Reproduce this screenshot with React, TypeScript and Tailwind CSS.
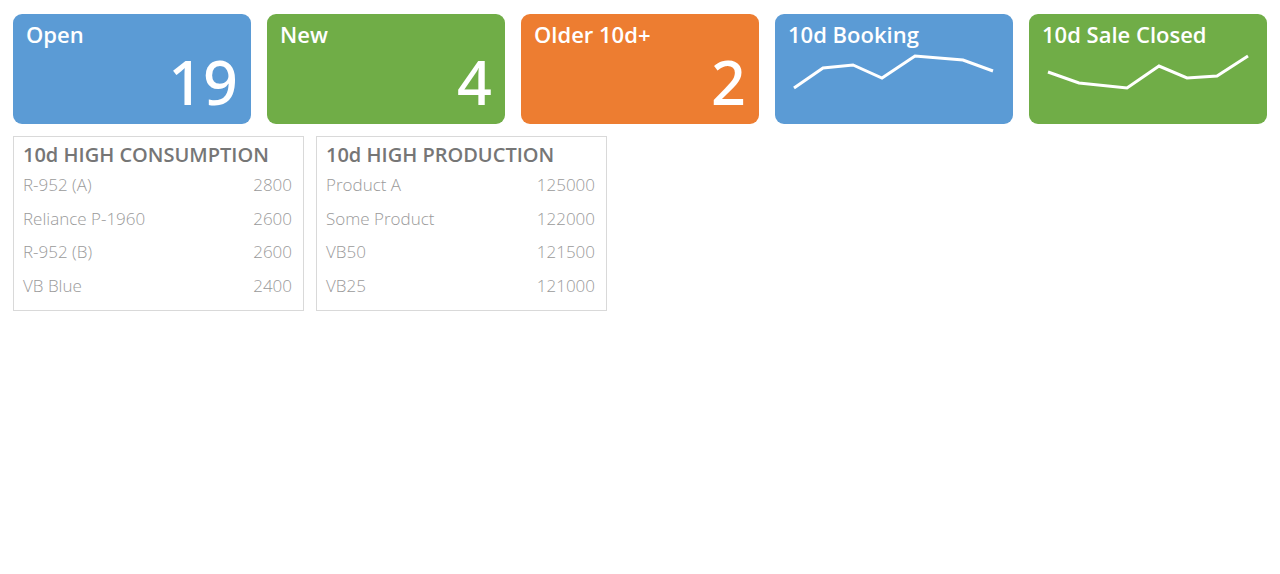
import React from "react"

const font = { fontFamily: '"Segoe UI", "Open Sans", "Noto Sans", sans-serif' }
const numFont = { fontFamily: '"Segoe UI", "Noto Sans", "Open Sans", sans-serif' }

type Tile = { title: string; value?: string; color: string; line?: [number, number][] }

// sparkline points are relative to the tile's top-left corner
const tiles: Tile[] = [
  { title: "Open", value: "19", color: "bg-[#5b9bd5]" },
  { title: "New", value: "4", color: "bg-[#70ad47]" },
  { title: "Older 10d+", value: "2", color: "bg-[#ed7d31]" },
  {
    title: "10d Booking",
    color: "bg-[#5b9bd5]",
    line: [[19, 74], [48, 54], [78, 51], [107, 64], [140, 42], [188, 46], [218, 57]],
  },
  {
    title: "10d Sale Closed",
    color: "bg-[#70ad47]",
    line: [[19, 58], [50, 69], [98, 74], [130, 52], [158, 64], [188, 62], [219, 42]],
  },
]

const consumption = [
  ["R-952 (A)", "2800"],
  ["Reliance P-1960", "2600"],
  ["R-952 (B)", "2600"],
  ["VB Blue", "2400"],
]

const production = [
  ["Product A", "125000"],
  ["Some Product", "122000"],
  ["VB50", "121500"],
  ["VB25", "121000"],
]

const KpiTile = ({ tile }: { tile: Tile }) => (
  <div className={`relative flex-1 h-[110px] rounded-[9px] ${tile.color} text-white`}>
    <div className="px-[13px] pt-[5px] text-[22px] font-semibold leading-[30px]">{tile.title}</div>
    {tile.value && (
      <div className="absolute right-[13px] top-[33px] text-[61px] leading-[70px] font-medium" style={numFont}>
        {tile.value}
      </div>
    )}
    {tile.line && (
      <svg className="absolute inset-0" width="238" height="110">
        <polyline
          points={tile.line.map((p) => p.join(",")).join(" ")}
          fill="none"
          stroke="white"
          strokeWidth="3"
          strokeLinejoin="miter"
        />
      </svg>
    )}
  </div>
)

const ListBox = ({ title, rows }: { title: string; rows: string[][] }) => (
  <div className="w-[291px] h-[175px] border border-[#d9d9d9] pl-[9px] pr-[11px] pt-[5px]">
    <div className="text-[20px] font-semibold text-[#767676] leading-[26px]">{title}</div>
    <div className="flex flex-col">
      {rows.map(([name, val]) => (
        <div key={name} className="flex justify-between h-[33.5px] items-center text-[17px] font-light text-[#9a9a9a]">
          <span>{name}</span>
          <span>{val}</span>
        </div>
      ))}
    </div>
  </div>
)

export default function App() {
  return (
    <div className="min-h-screen bg-white px-[13px] pt-[14px]" style={font}>
      <div className="flex gap-4">
        {tiles.map((t) => (
          <KpiTile key={t.title} tile={t} />
        ))}
      </div>
      <div className="flex gap-[12px] mt-[12px]">
        <ListBox title="10d HIGH CONSUMPTION" rows={consumption} />
        <ListBox title="10d HIGH PRODUCTION" rows={production} />
      </div>
    </div>
  )
}
